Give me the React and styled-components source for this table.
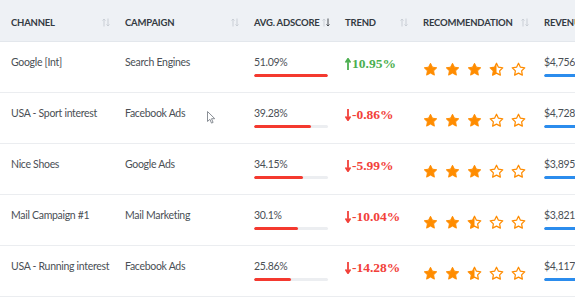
import React from 'react';
import styled, { createGlobalStyle } from 'styled-components';

const GlobalStyle = createGlobalStyle`
  html, body {
    margin: 0;
    padding: 0;
    background: #ffffff;
    overflow: hidden;
  }
  body {
    font-family: Lato, "Liberation Sans", sans-serif;
  }
`

const COLS = '114px 129px 91px 78px 121px 160px';

const Page = styled.div`
  width: 575px;
  height: 300px;
  overflow: hidden;
  position: relative;
`

const Table = styled.div`
  width: 693px;
`

const HeaderRow = styled.div`
  display: grid;
  grid-template-columns: ${COLS};
  height: 41px;
  background-color: #eef1f5;
  border-bottom: 1px solid #e3e7ec;
`

const HeadCell = styled.div`
  display: flex;
  align-items: center;
  justify-content: space-between;
  padding: 3px 4px 0 11px;
  font-size: 9.5px;
  font-weight: 700;
  letter-spacing: -0.2px;
  color: #333a42;
  white-space: nowrap;
  text-transform: uppercase;
`

const Row = styled.div`
  display: grid;
  grid-template-columns: ${COLS};
  height: 50px;
  border-bottom: 1px solid #ebedf0;
`

const Cell = styled.div`
  padding: ${p => p.$top || 12}px 0 0 11px;
  font-size: 10.5px;
  letter-spacing: -0.3px;
  line-height: 16px;
  color: #4a4f55;
  white-space: nowrap;
  overflow: hidden;
`

const Track = styled.div`
  margin-top: 4px;
  width: ${p => p.$width}px;
  height: 3px;
  background-color: #eceef1;
  border-radius: 2px;
  overflow: hidden;
`

const Fill = styled.div`
  height: 100%;
  background-color: ${p => p.$color};
  border-radius: 2px;
`

const Trend = styled.span`
  display: inline-flex;
  align-items: center;
  gap: 1px;
  font-family: "Liberation Serif", serif;
  font-weight: 700;
  font-size: 13.5px;
  letter-spacing: 0;
  color: ${p => (p.$up ? '#4caf50' : '#f2413a')};
`

const Arrow = styled.svg`
  flex: none;
`

const Stars = styled.div`
  display: flex;
  gap: 7px;
`

const Cursor = styled.svg`
  position: absolute;
  left: 207px;
  top: 111px;
`

const SortIcon = ({ active }) => (
  <svg width="8" height="9" viewBox="0 0 8 9">
    <path d="M2 8.5V1M0.5 2.5L2 1l1.5 1.5" stroke="#c9ced5" strokeWidth="1" fill="none" />
    <path d="M6 0.5V8M4.5 6.5L6 8l1.5-1.5" stroke={active ? '#4a4f55' : '#c9ced5'} strokeWidth="1" fill="none" />
  </svg>
);

const TrendArrow = ({ up }) => (
  <Arrow width="6" height="12" viewBox="0 0 6 12">
    {up ? (
      <path d="M3 12V1.5M0.5 4.5L3 0.8l2.5 3.7" stroke="currentColor" strokeWidth="1.8" fill="none" />
    ) : (
      <path d="M3 0V10.5M0.5 7.5L3 11.2l2.5-3.7" stroke="currentColor" strokeWidth="1.8" fill="none" />
    )}
  </Arrow>
);

const STAR = 'M12 2l3.09 6.26L22 9.27l-5 4.87 1.18 6.88L12 17.77l-6.18 3.25L7 14.14 2 9.27l6.91-1.01L12 2z';

const Star = ({ kind, id }) => (
  <svg width="15" height="15" viewBox="0 0 24 24">
    <defs>
      <clipPath id={id}>
        <rect x="0" y="0" width="12" height="24" />
      </clipPath>
    </defs>
    {kind === 'full' && <path d={STAR} fill="#ff8c00" stroke="#ff8c00" strokeWidth="1.5" strokeLinejoin="round" />}
    {kind === 'half' && <path d={STAR} fill="#ff8c00" clipPath={`url(#${id})`} />}
    {kind !== 'full' && <path d={STAR} fill="none" stroke="#ff8c00" strokeWidth="2" strokeLinejoin="round" />}
  </svg>
);

const Rating = ({ value, rowId }) => {
  const stars = [];
  for (let i = 0; i < 5; i++) {
    const left = value - i;
    const kind = left >= 1 ? 'full' : left >= 0.5 ? 'half' : 'empty';
    stars.push(<Star key={i} kind={kind} id={`half-${rowId}-${i}`} />);
  }
  return <Stars>{stars}</Stars>;
};

const rows = [
  { channel: 'Google [Int]', campaign: 'Search Engines', score: '51.09', trend: '10.95%', up: true, rating: 3.5, revenue: '$4,756.48' },
  { channel: 'USA - Sport interest', campaign: 'Facebook Ads', score: '39.28', trend: '-0.86%', rating: 3, revenue: '$4,728.60' },
  { channel: 'Nice Shoes', campaign: 'Google Ads', score: '34.15', trend: '-5.99%', rating: 3, revenue: '$3,895.12' },
  { channel: 'Mail Campaign #1', campaign: 'Mail Marketing', score: '30.1', trend: '-10.04%', rating: 2.5, revenue: '$3,821.14' },
  { channel: 'USA - Running interest', campaign: 'Facebook Ads', score: '25.86', trend: '-14.28%', rating: 2.5, revenue: '$4,117.30' },
];

const headers = ['Channel', 'Campaign', 'Avg. Adscore', 'Trend', 'Recommendation', 'Revenue'];

const App = () => {
  const max = 51.09;
  return (
    <Page>
      <GlobalStyle />
      <Table>
        <HeaderRow>
          {headers.map((h, i) => (
            <HeadCell key={h}>
              <span>{h}</span>
              {i < 5 && <SortIcon active={i === 2} />}
            </HeadCell>
          ))}
        </HeaderRow>
        {rows.map((r, idx) => (
          <Row key={r.channel}>
            <Cell>{r.channel}</Cell>
            <Cell>{r.campaign}</Cell>
            <Cell>
              {r.score}%
              <Track $width={74}>
                <Fill $color="#f4392f" style={{ width: `${(parseFloat(r.score) / max) * 100}%` }} />
              </Track>
            </Cell>
            <Cell $top={14}>
              <Trend $up={r.up}>
                <TrendArrow up={r.up} />
                {r.trend}
              </Trend>
            </Cell>
            <Cell $top={20}>
              <Rating value={r.rating} rowId={idx} />
            </Cell>
            <Cell>
              {r.revenue}
              <Track $width={150}>
                <Fill $color="#2b8ced" style={{ width: '100%' }} />
              </Track>
            </Cell>
          </Row>
        ))}
      </Table>
      <Cursor width="9" height="13" viewBox="0 0 9 13">
        <path d="M0.5 0.5v10l2.4-2.2 1.6 3.8 1.6-0.7-1.6-3.7h3.3z" fill="#ffffff" stroke="#8a8f96" strokeWidth="1" strokeLinejoin="round" />
      </Cursor>
    </Page>
  );
};

export default App;
